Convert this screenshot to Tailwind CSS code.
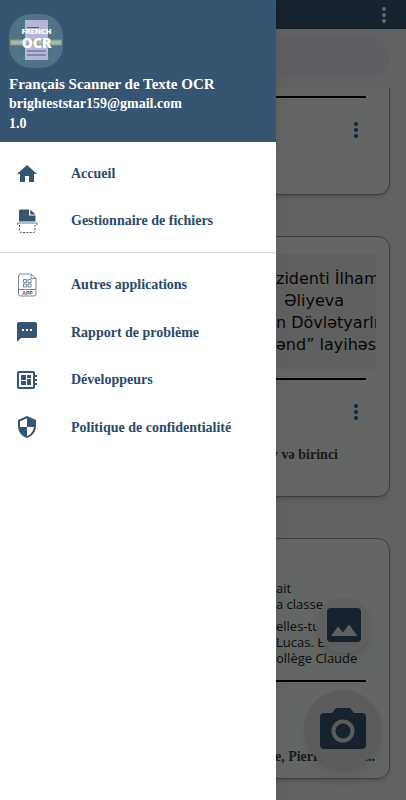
<!DOCTYPE html>
<html lang="fr">
<head>
<meta charset="utf-8">
<meta name="viewport" content="width=device-width, initial-scale=1">
<title>Français Scanner de Texte OCR</title>
<script src="https://cdn.jsdelivr.net/npm/@tailwindcss/browser@4"></script>
</head>
<body class="bg-[#f5f5f5] font-['Liberation_Serif',serif]">
<div class="relative h-screen overflow-hidden">

  <div class="flex h-full flex-col">
    <header class="flex h-[29px] shrink-0 items-center justify-end bg-[#385572] pr-4">
      <button aria-label="Options" class="flex w-3 justify-center">
        <svg class="h-4 w-1" viewBox="0 0 4 16" fill="#fff"><circle cx="2" cy="2" r="2"/><circle cx="2" cy="8" r="2"/><circle cx="2" cy="14" r="2"/></svg>
      </button>
    </header>
    <div class="px-4 pt-[7px] pb-[10px]">
      <input type="search" aria-label="Rechercher" class="block h-[42px] w-full rounded-full bg-[#ededf8] px-5">
    </div>
    <main class="flex min-h-0 flex-1 flex-col gap-[41px] overflow-hidden px-4 font-bold text-[#444]">
      <article class="flex h-[107px] shrink-0 flex-col rounded-b-xl border border-t-0 border-[#999] bg-[#f7fffc] px-[23px] shadow-md">
        <hr class="mt-2 border-t-2 border-black">
        <button aria-label="Options du document" class="mt-6 mr-1 flex w-3 justify-center self-end">
          <svg class="h-4 w-1" viewBox="0 0 4 16" fill="#0d62b0"><circle cx="2" cy="2" r="2"/><circle cx="2" cy="8" r="2"/><circle cx="2" cy="14" r="2"/></svg>
        </button>
      </article>
      <article class="flex h-[261px] shrink-0 flex-col rounded-xl border border-[#999] bg-[#f7fffc] px-[13px] pt-[17px] shadow-md">
        <div class="h-[115px] overflow-hidden bg-[#efefef] pt-[14px] pl-[246px] font-['DejaVu_Sans',sans-serif] text-[16px] leading-[22px] font-normal whitespace-nowrap text-[#111]">
          <p>zidenti İlham</p>
          <p class="pl-2">Əliyeva</p>
          <p>n Dövlətyarlı</p>
          <p>ənd” layihəsi</p>
        </div>
        <hr class="mx-[10px] mt-[9px] border-t-2 border-black">
        <button aria-label="Options du document" class="mt-6 mr-[14px] flex w-3 justify-center self-end">
          <svg class="h-4 w-1" viewBox="0 0 4 16" fill="#0d62b0"><circle cx="2" cy="2" r="2"/><circle cx="2" cy="8" r="2"/><circle cx="2" cy="14" r="2"/></svg>
        </button>
        <p class="mt-6 pr-[38px] text-right text-[14px] leading-[22px]">y və birinci</p>
      </article>
      <article class="flex h-[241px] shrink-0 flex-col rounded-xl border border-[#999] bg-[#f7fffc] px-[13px] pt-[17px] shadow-md">
        <div class="h-[115px] overflow-hidden pt-6 pl-[246px] font-['Open_Sans',sans-serif] text-[13px] leading-4 font-normal whitespace-nowrap text-[#222]">
          <p>ait</p>
          <p>a classe</p>
          <p class="mt-[6px]">elles-tu</p>
          <p>Lucas. Et</p>
          <p>ollège Claude</p>
        </div>
        <hr class="mx-[10px] mt-[9px] border-t-2 border-black">
        <p class="mt-16 pr-[1px] text-right text-[14px] leading-[22px]">ge, Pierre Lucas...</p>
      </article>
    </main>
  </div>

  <button aria-label="Choisir une image" class="absolute right-[34px] bottom-[147px] flex size-14 items-center justify-center rounded-full bg-[#f0f0f2] shadow-lg">
    <svg class="size-[34px]" viewBox="0 0 34 34"><rect width="34" height="34" rx="4" fill="#385572"/><path d="M4 28 L11 18.500 L16 24.500 L22 16.500 L30.500 28Z" fill="#f0f0f2"/></svg>
  </button>
  <button aria-label="Prendre une photo" class="absolute right-6 bottom-8 flex size-[78px] items-center justify-center rounded-full bg-[#e6e6e8] shadow-lg">
    <svg class="h-[42px] w-[46px]" viewBox="0 0 46 42"><path d="M4 5H12L16 0H30L34 5H42Q46 5 46 9V37Q46 41 42 41H4Q0 41 0 37V9Q0 5 4 5Z" fill="#385572"/><circle cx="23" cy="23" r="9.500" fill="none" stroke="#e6e6e8" stroke-width="4"/></svg>
  </button>

  <div class="absolute inset-0 bg-black/60"></div>

  <aside class="absolute inset-y-0 left-0 w-[276px] bg-white shadow-lg">
    <div class="bg-[#365572] px-[9px] pt-[14px] pb-2 font-bold text-white">
      <svg class="mb-[6px] size-[54px]" viewBox="0 0 54 54" role="img" aria-label="French OCR">
        <rect width="54" height="54" rx="22" fill="#507285"/>
        <path d="M9 9H45V45H9Z" fill="none" stroke="#5f8290" stroke-width=".6"/>
        <rect x="16" y="6" width="23" height="40" fill="#b4b8d6"/>
        <path d="M18 13.500h12M18 37h19M18 41h19" stroke="#55577a"/>
        <rect x="1.500" y="26" width="51" height="5" fill="#9fb6c6" stroke="#8e9b4e"/>
        <text x="27.500" y="20" text-anchor="middle" font-family="Open Sans, sans-serif" font-weight="800" font-size="7.500" fill="#fff">FRENCH</text>
        <text x="27.500" y="33.500" text-anchor="middle" font-family="Open Sans, sans-serif" font-weight="800" font-size="14" fill="#fff">OCR</text>
      </svg>
      <p class="text-[15px] leading-5">Français Scanner de Texte OCR</p>
      <p class="text-[14px] leading-5">brighteststar159@gmail.com</p>
      <p class="text-[14px] leading-5">1.0</p>
    </div>
    <nav class="text-[14px] font-bold text-[#2a4a69]">
      <div class="border-b border-[#d8d8d8] py-2">
        <a href="#" class="flex h-[47px] items-center gap-8 pl-[15px]">
          <svg class="size-6 shrink-0" viewBox="0 0 24 24" fill="#365572"><path d="M10 20v-6h4v6h5v-8h3L12 3 2 12h3v8z"/></svg>Accueil</a>
        <a href="#" class="flex h-[47px] items-center gap-8 pl-[15px]">
          <svg class="size-6 shrink-0" viewBox="0 0 24 24"><path d="M4 12.500V2Q4 .5 5.500 .5H14V6.500H20.500V12.500Z" fill="#365572"/><path d="M15.300 .5 20.500 5.500H15.300Z" fill="#365572"/><path d="M2.500 16V14H22V16" fill="none" stroke="#6a7e93"/><path d="M4.500 16V21.500Q4.500 23.500 6.500 23.500H18Q20 23.500 20 21.500V16" fill="none" stroke="#40505f" stroke-dasharray="2 1.300"/></svg>Gestionnaire de fichiers</a>
      </div>
      <div class="py-2">
        <a href="#" class="flex h-[47px] items-center gap-8 pl-[15px]">
          <svg class="size-6 shrink-0" viewBox="0 0 24 24" fill="none" stroke="#536b84" stroke-width=".8"><path d="M15.500 1H5.500Q3.500 1 3.500 3V21Q3.500 23 5.500 23H19Q21 23 21 21V5.500L16 1V5.500H21M3.500 16.500H21"/><path d="M8.500 6.500h3v3h-3zM13 6.500h3v3h-3zM8.500 11h3v3h-3zM13 11h3v3h-3z"/><text x="12.500" y="21.500" text-anchor="middle" font-family="Liberation Sans, sans-serif" font-weight="700" font-size="5" fill="#365572" stroke="none">APP</text></svg>Autres applications</a>
        <a href="#" class="flex h-12 items-center gap-8 pl-[15px]">
          <svg class="size-6 shrink-0" viewBox="0 0 24 24" fill="#365572"><path d="M20 2H4c-1.100 0-2 .9-2 2v18l4-4h14c1.100 0 2-.9 2-2V4c0-1.100-.9-2-2-2zM9 11H7V9h2zm4 0h-2V9h2zm4 0h-2V9h2z"/></svg>Rapport de problème</a>
        <a href="#" class="flex h-[47px] items-center gap-8 pl-[15px]">
          <svg class="size-6 shrink-0" viewBox="0 0 24 24" fill="#365572"><path d="M22 9V7h-2V5c0-1.100-.9-2-2-2H4c-1.100 0-2 .9-2 2v14c0 1.100.9 2 2 2h14c1.100 0 2-.9 2-2v-2h2v-2h-2v-2h2v-2h-2V9h2zm-4 10H4V5h14v14zM6 13h5v4H6zm6-6h4v3h-4zM6 7h5v5H6zm6 4h4v6h-4z"/></svg>Développeurs</a>
        <a href="#" class="flex h-12 items-center gap-8 pl-[15px]">
          <svg class="size-6 shrink-0" viewBox="0 0 24 24" fill="#365572"><path d="M12 1 3 5v6c0 5.550 3.840 10.740 9 12 5.160-1.260 9-6.450 9-12V5l-9-4zm0 10.990h7c-.53 4.120-3.280 7.790-7 8.940V12H5V6.300l7-3.110v8.800z"/></svg>Politique de confidentialité</a>
      </div>
    </nav>
  </aside>
</div>
</body>
</html>
